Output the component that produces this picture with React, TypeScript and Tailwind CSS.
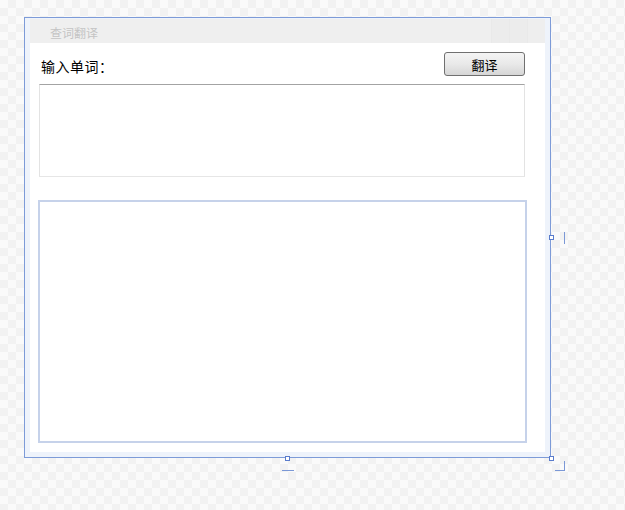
export default function App() {
  return (
    <div
      className="relative h-[510px] w-[625px] overflow-hidden bg-[#f7f7f7] bg-[conic-gradient(#f2f2f2_25%,#fafafa_0_50%,#f2f2f2_0_75%,#fafafa_0)] bg-[length:16px_16px] pt-[17px] pl-[24px]"
      style={{ fontFamily: '"Noto Sans CJK SC", "Liberation Sans", sans-serif' }}
    >
      {/* form frame */}
      <div className="flex h-[441px] w-[527px] flex-col border border-[#7d9bd8] bg-[#eef3fb] px-[5px] pt-[1px] pb-[5px]">
        {/* title bar */}
        <div className="flex h-[24px] items-center bg-[#efefef]">
          <span className="pt-[3px] pl-[20px] text-[12px] leading-none text-[#c4c4c4]">查词翻译</span>
          <div className="ml-auto flex h-full">
            <div className="h-full w-[18px] border-l border-[#e9e9e9] bg-[#ececec]" />
            <div className="h-full w-[18px] border-l border-[#e9e9e9] bg-[#ececec]" />
            <div className="h-full w-[18px] border-l border-[#e9e9e9] bg-[#eeeeee]" />
          </div>
        </div>

        {/* body */}
        <div className="flex flex-1 flex-col bg-white pt-[9px]">
          <div className="flex h-[24px] items-center pr-[20px] pl-[11px]">
            <span className="pt-[3px] text-[14px] leading-none tracking-[0.5px] text-black">输入单词：</span>
            <button className="ml-auto h-[24px] w-[81px] rounded-[3px] border border-[#707070] bg-gradient-to-b from-[#f4f4f4] via-[#e9e9e9] to-[#d6d6d6] text-[13px] leading-none text-black">
              翻译
            </button>
          </div>

          <div className="mt-[8px] mr-[20px] ml-[9px] h-[93px] border border-t-[#a3a3a3] border-r-[#e3e3e3] border-b-[#e6e6e6] border-l-[#e3e3e3] bg-white" />

          <div className="mt-[23px] mr-[18px] ml-[8px] h-[243px] border-2 border-[#c6d2ea] bg-white" />
        </div>
      </div>

      {/* resize handles */}
      <div className="absolute top-[235px] left-[549px] h-[5px] w-[5px] border border-[#5a7ccc] bg-white" />
      <div className="absolute top-[232px] left-[564px] h-[12px] w-[1px] bg-[#7b98d6]" />

      <div className="absolute top-[456px] left-[285px] h-[5px] w-[5px] border border-[#5a7ccc] bg-white" />
      <div className="absolute top-[470px] left-[282px] h-[1px] w-[12px] bg-[#7b98d6]" />

      <div className="absolute top-[456px] left-[549px] h-[5px] w-[5px] border border-[#5a7ccc] bg-white" />
      <div className="absolute top-[461px] left-[564px] h-[10px] w-[1px] bg-[#7b98d6]" />
      <div className="absolute top-[470px] left-[555px] h-[1px] w-[10px] bg-[#7b98d6]" />
    </div>
  );
}
